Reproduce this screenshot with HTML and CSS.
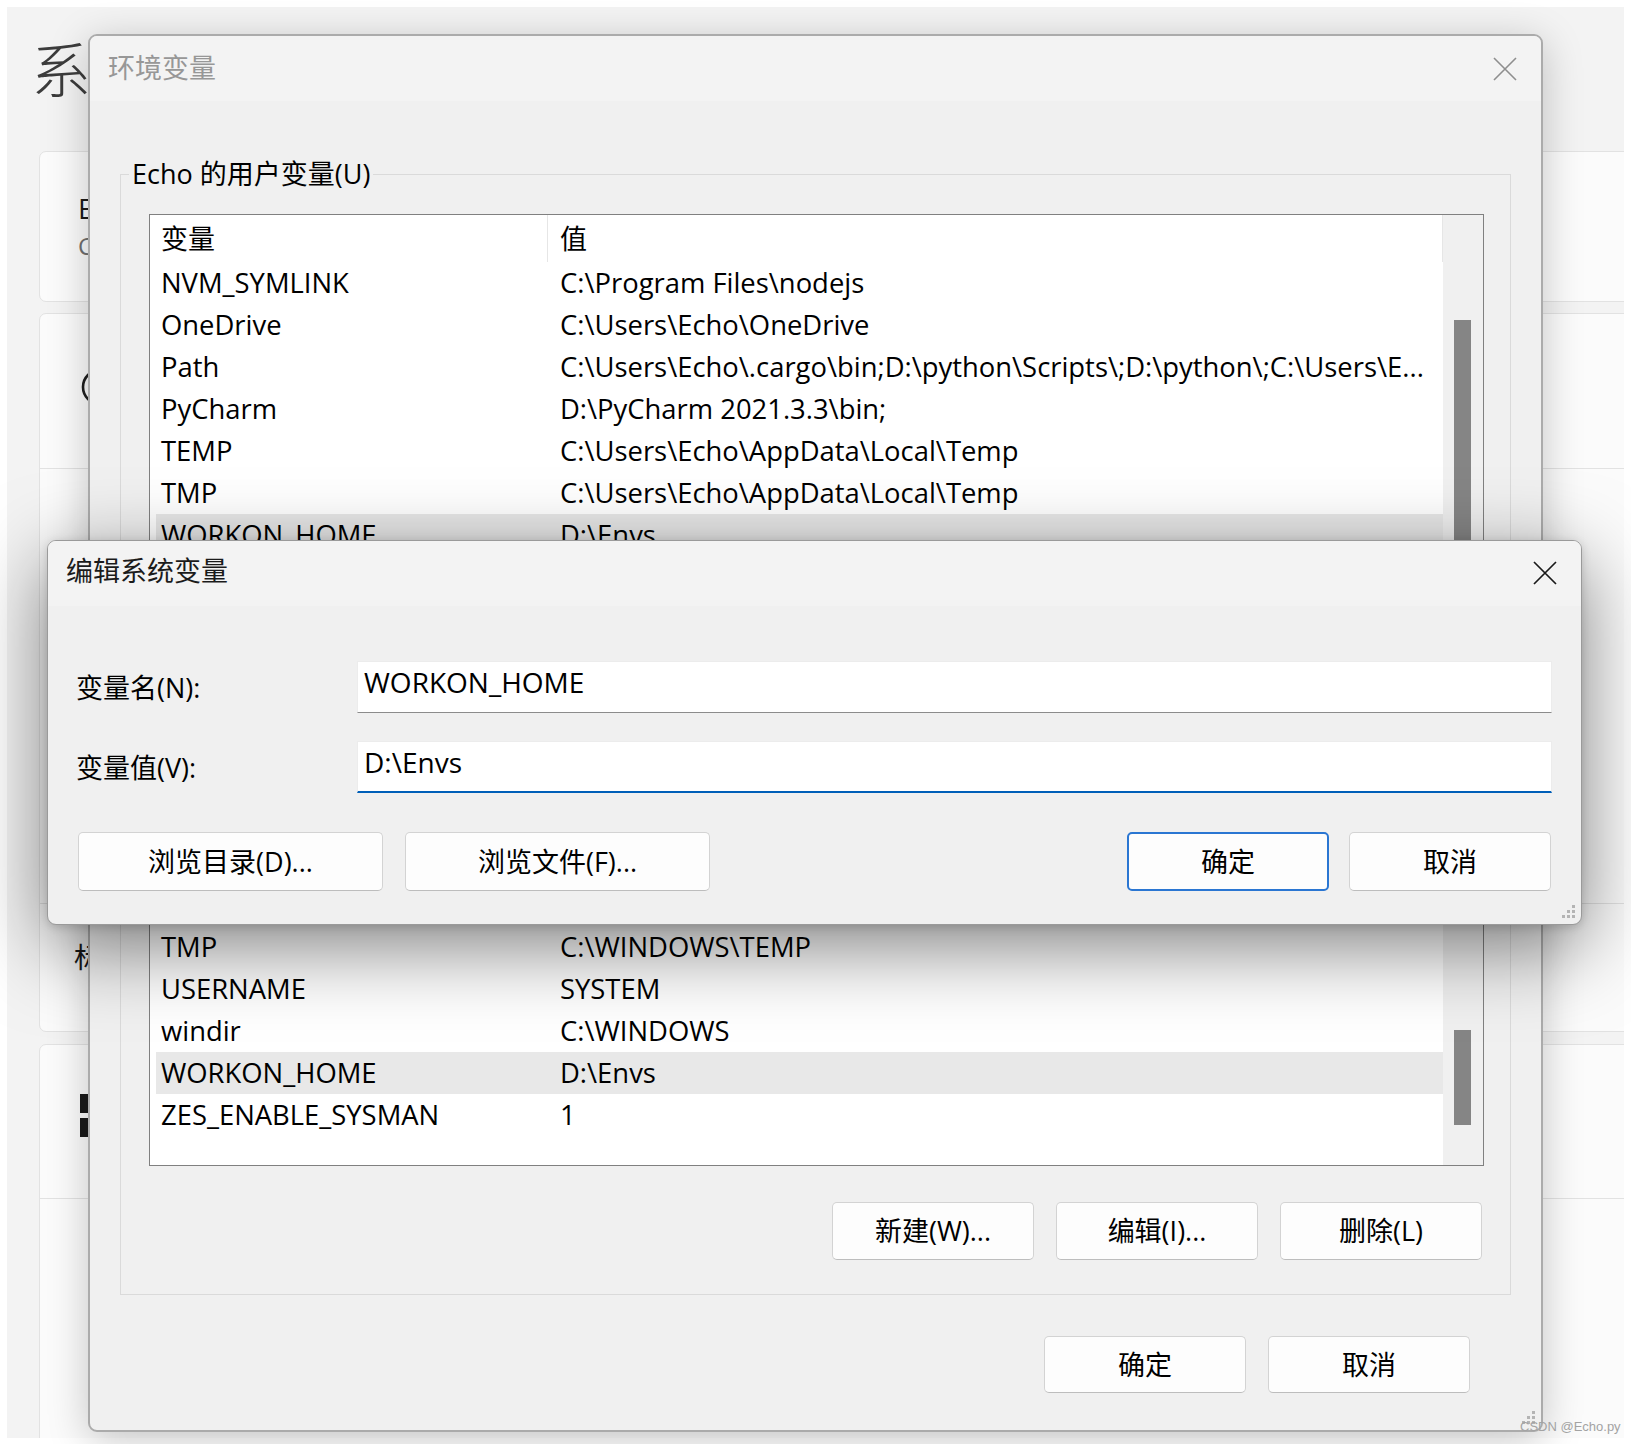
FILE: index.html
```html
<!DOCTYPE html>
<html lang="zh-CN">
<head>
<meta charset="utf-8">
<title>编辑系统变量</title>
<link rel="stylesheet" href="styles.css">
</head>
<body>
<div class="desktop">
  <div class="settings">
    <div class="settings-title">系</div>
    <div class="cards">
      <div class="card card-a">
        <div class="card-lines">
          <div class="ct-main">E</div>
          <div class="ct-sub">C</div>
        </div>
      </div>
      <div class="card card-b">
        <div class="sec sec-b1">
          <svg class="ring" width="40" height="40" viewBox="0 0 40 40"><circle cx="20" cy="20" r="17" fill="none" stroke="#1f1f1f" stroke-width="2.6"/></svg>
        </div>
        <div class="sec sec-b2"></div>
        <div class="sec sec-b3"><span class="ct-main">标</span></div>
      </div>
      <div class="card card-c">
        <div class="sec sec-c1">
          <svg class="tiles" width="44" height="44" viewBox="0 0 44 44"><rect x="0" y="0" width="9" height="19" fill="#1a1a1a"/><rect x="0" y="24" width="9" height="19" fill="#1a1a1a"/><rect x="24" y="0" width="19" height="19" fill="#1a1a1a"/><rect x="24" y="24" width="19" height="19" fill="#1a1a1a"/></svg>
        </div>
        <div class="sec sec-c2"></div>
      </div>
    </div>
  </div>

  <div class="window env">
    <div class="titlebar env-titlebar">
      <span class="title inactive">环境变量</span>
      <svg class="close close-inactive" width="24" height="24" viewBox="0 0 24 24"><path d="M1 1L23 23M23 1L1 23" stroke="#8e8e8e" stroke-width="1.6" fill="none"/></svg>
    </div>
    <div class="env-body">
      <fieldset class="group group-user">
        <legend>Echo 的用户变量(U)</legend>
        <div class="group-body">
          <div class="list list-user">
            <div class="list-main">
              <div class="list-head"><span class="h1">变量</span><span class="h2">值</span></div>
              <div class="list-rows">
                <div class="row"><span class="c1">NVM_SYMLINK</span><span class="c2">C:\Program Files\nodejs</span></div>
                <div class="row"><span class="c1">OneDrive</span><span class="c2">C:\Users\Echo\OneDrive</span></div>
                <div class="row"><span class="c1">Path</span><span class="c2">C:\Users\Echo\.cargo\bin;D:\python\Scripts\;D:\python\;C:\Users\E...</span></div>
                <div class="row"><span class="c1">PyCharm</span><span class="c2">D:\PyCharm 2021.3.3\bin;</span></div>
                <div class="row"><span class="c1">TEMP</span><span class="c2">C:\Users\Echo\AppData\Local\Temp</span></div>
                <div class="row"><span class="c1">TMP</span><span class="c2">C:\Users\Echo\AppData\Local\Temp</span></div>
                <div class="row selected"><span class="c1">WORKON_HOME</span><span class="c2">D:\Envs</span></div>
              </div>
            </div>
            <div class="track"><div class="thumb thumb-user"></div></div>
          </div>
        </div>
      </fieldset>

      <fieldset class="group group-sys">
        <div class="group-body">
          <div class="list list-sys">
            <div class="list-main">
              <div class="list-head"></div>
              <div class="list-rows">
                <div class="row"></div>
                <div class="row"></div>
                <div class="row"></div>
                <div class="row"></div>
                <div class="row"><span class="c1">TMP</span><span class="c2">C:\WINDOWS\TEMP</span></div>
                <div class="row"><span class="c1">USERNAME</span><span class="c2">SYSTEM</span></div>
                <div class="row"><span class="c1">windir</span><span class="c2">C:\WINDOWS</span></div>
                <div class="row selected"><span class="c1">WORKON_HOME</span><span class="c2">D:\Envs</span></div>
                <div class="row"><span class="c1">ZES_ENABLE_SYSMAN</span><span class="c2">1</span></div>
              </div>
            </div>
            <div class="track"><div class="thumb thumb-sys"></div></div>
          </div>
          <div class="btn-row group-btns">
            <button class="btn">新建(W)...</button>
            <button class="btn">编辑(I)...</button>
            <button class="btn">删除(L)</button>
          </div>
        </div>
      </fieldset>

      <div class="btn-row dialog-actions">
        <button class="btn">确定</button>
        <button class="btn">取消</button>
      </div>
    </div>
    <svg class="grip" width="14" height="14" viewBox="0 0 14 14"><g fill="#b4b4b4"><rect x="10" y="0" width="3" height="3"/><rect x="10" y="5" width="3" height="3"/><rect x="5" y="5" width="3" height="3"/><rect x="10" y="10" width="3" height="3"/><rect x="5" y="10" width="3" height="3"/><rect x="0" y="10" width="3" height="3"/></g></svg>
  </div>

  <div class="window edit">
    <div class="titlebar edit-titlebar">
      <span class="title">编辑系统变量</span>
      <svg class="close" width="24" height="24" viewBox="0 0 24 24"><path d="M1 1L23 23M23 1L1 23" stroke="#1a1a1a" stroke-width="1.7" fill="none"/></svg>
    </div>
    <div class="edit-body">
      <div class="fields">
        <label class="field-label">变量名(N):</label>
        <div class="textbox">WORKON_HOME</div>
        <label class="field-label">变量值(V):</label>
        <div class="textbox focused">D:\Envs</div>
      </div>
      <div class="edit-buttons">
        <div class="btn-group left">
          <button class="btn wide">浏览目录(D)...</button>
          <button class="btn wide">浏览文件(F)...</button>
        </div>
        <div class="btn-group right">
          <button class="btn default">确定</button>
          <button class="btn">取消</button>
        </div>
      </div>
    </div>
    <svg class="grip" width="14" height="14" viewBox="0 0 14 14"><g fill="#b4b4b4"><rect x="10" y="0" width="3" height="3"/><rect x="10" y="5" width="3" height="3"/><rect x="5" y="5" width="3" height="3"/><rect x="10" y="10" width="3" height="3"/><rect x="5" y="10" width="3" height="3"/><rect x="0" y="10" width="3" height="3"/></g></svg>
  </div>

  <div class="watermark">CSDN @Echo.py</div>
</div>
</body>
</html>
```

FILE: styles.css
```css
* { box-sizing: border-box; }
html, body { margin: 0; padding: 0; }
body {
  width: 1631px;
  height: 1444px;
  overflow: hidden;
  background: #ffffff;
  font-family: "Open Sans", "Noto Sans CJK SC", sans-serif;
  color: #000;
}
.desktop { position: relative; width: 1631px; height: 1444px; }

/* background settings window */
.settings {
  position: absolute;
  left: 7px;
  top: 7px;
  width: 1617px;
  height: 1431px;
  background: #f3f3f3;
  overflow: hidden;
}
.settings-title {
  margin: 28px 0 0 24px;
  font-family: "Noto Sans CJK SC", sans-serif;
  font-weight: 300;
  font-size: 60px;
  line-height: 64px;
  color: #3c3c3c;
}
.cards { margin: 52px 0 0 32px; width: 1620px; display: flex; flex-direction: column; }
.card { background: #fbfbfb; border: 1px solid #e2e2e2; border-radius: 7px; }
.card-a { height: 151px; display: flex; align-items: center; padding-left: 38px; }
.card-lines { display: flex; flex-direction: column; }
.ct-main { font-size: 28px; line-height: 37px; color: #1a1a1a; }
.ct-sub { font-size: 24px; line-height: 37px; color: #6f6f6f; }
.card-b { margin-top: 11px; height: 719px; display: flex; flex-direction: column; }
.card-c { margin-top: 12px; height: 500px; display: flex; flex-direction: column; }
.sec { display: flex; align-items: center; padding-left: 40px; }
.sec + .sec { border-top: 1px solid #e2e2e2; }
.sec-b1 { height: 154px; padding-bottom: 8px; }
.sec-b2 { height: 435px; }
.sec-b3 { flex: 1; padding-left: 34px; padding-bottom: 20px; }
.sec-c1 { height: 153px; padding-bottom: 12px; }
.sec-c2 { flex: 1; }

/* windows */
.window {
  position: absolute;
  display: flex;
  flex-direction: column;
  overflow: hidden;
}
.env {
  left: 88px;
  top: 34px;
  width: 1455px;
  height: 1398px;
  border: 2px solid #ababab;
  border-radius: 9px;
  background: #f0f0f0;
  box-shadow: 0 8px 40px rgba(0, 0, 0, 0.22);
}
.edit {
  left: 47px;
  top: 540px;
  width: 1535px;
  height: 385px;
  border: 1px solid #9a9a9a;
  border-radius: 9px;
  background: #f0f0f0;
  box-shadow: 0 22px 80px rgba(0, 0, 0, 0.5), 0 2px 10px rgba(0, 0, 0, 0.15);
}
.titlebar {
  display: flex;
  align-items: center;
  justify-content: space-between;
  background: #f3f3f3;
  flex: none;
}
.env-titlebar { height: 65px; padding: 0 24px 4px 18px; }
.edit-titlebar { height: 65px; padding: 0 24px 8px 18px; }
.close { display: block; }
.env-titlebar .close { margin-top: 4px; }
.edit-titlebar .close { margin-top: 6px; }
.title {
  font-family: "Noto Sans CJK SC", sans-serif;
  font-size: 27px;
  line-height: 36px;
  color: #1b1b1b;
}
.title.inactive { color: #979797; }

/* environment dialog body */
.env-body {
  flex: 1;
  display: flex;
  flex-direction: column;
  padding: 0 30px;
}
.group {
  margin: 0;
  padding: 0;
  border: 1px solid #dadada;
  min-width: 0;
}
.group legend {
  margin-left: 8px;
  padding: 0 3px;
  font-size: 27px;
  line-height: 36px;
}
.group-user { margin-top: 55px; }
.group-sys { margin-top: 59px; }
.group-body { padding: 22px 26px 20px 28px; }
.group-sys .group-body { padding: 39px 26px 34px 28px; }

.list {
  display: flex;
  border: 1px solid #808080;
  background: #ffffff;
  overflow: hidden;
}
.list-user { height: 376px; }
.list-sys { height: 456px; }
.list-main { flex: 1; min-width: 0; display: flex; flex-direction: column; }
.list-head { display: flex; height: 47px; flex: none; }
.list-head span { font-size: 27px; line-height: 47px; }
.h1 { width: 398px; padding-left: 11px; border-right: 1px solid #e6e6e6; }
.h2 { flex: 1; padding-left: 12px; border-right: 1px solid #e6e6e6; }
.list-rows { flex: 1; overflow: hidden; }
.row {
  display: flex;
  height: 42px;
  margin-left: 6px;
  padding-left: 5px;
  font-size: 27.4px;
  line-height: 42px;
  white-space: nowrap;
}
.row.selected { background: #e8e8e8; }
.c1 { width: 387px; flex: none; }
.c2 { padding-left: 12px; }
.track { width: 40px; flex: none; background: #f0f0f0; }
.thumb { width: 17px; margin-left: 11px; background: #858585; }
.thumb-user { margin-top: 105px; height: 330px; }
.thumb-sys { margin-top: 319px; height: 95px; }

.btn-row { display: flex; justify-content: flex-end; gap: 22px; }
.group-btns { margin-top: 36px; margin-right: 2px; }
.dialog-actions { margin-top: 41px; margin-right: 41px; }

.btn {
  width: 202px;
  height: 58px;
  padding: 0;
  background: #fdfdfd;
  border: 1px solid #d3d3d3;
  border-bottom-color: #bdbdbd;
  border-radius: 5px;
  font-family: "Open Sans", "Noto Sans CJK SC", sans-serif;
  font-size: 27px;
  line-height: 36px;
  color: #000;
}
.dialog-actions .btn { height: 57px; }
.btn.wide { width: 305px; }
.btn.default { border: 2px solid #2a76d2; }

/* edit dialog body */
.edit-body {
  flex: 1;
  padding: 55px 29px 33px 28px;
  display: flex;
  flex-direction: column;
}
.fields {
  display: grid;
  grid-template-columns: 281px 1fr;
  grid-auto-rows: 52px;
  row-gap: 28px;
  align-items: center;
}
.field-label { font-size: 27px; line-height: 36px; padding-top: 1px; }
.textbox {
  height: 52px;
  padding: 0 6px 10px;
  background: #ffffff;
  border: 1px solid #ececec;
  border-bottom: 1px solid #8c8c8c;
  font-size: 28px;
  line-height: 41px;
  white-space: nowrap;
}
.textbox.focused { border-bottom: 2px solid #005fb8; }
.edit-buttons {
  margin-top: 39px;
  display: flex;
  justify-content: space-between;
}
.edit-buttons .btn { height: 59px; }
.btn-group { display: flex; }
.btn-group.left { gap: 22px; margin-left: 2px; }
.btn-group.right { gap: 20px; margin-right: 1px; }

.grip { position: absolute; right: 5px; bottom: 5px; }

.watermark {
  position: absolute;
  left: 1520px;
  top: 1418px;
  font-family: "Liberation Sans", sans-serif;
  font-size: 13px;
  line-height: 18px;
  color: #a3a3a3;
}
```
